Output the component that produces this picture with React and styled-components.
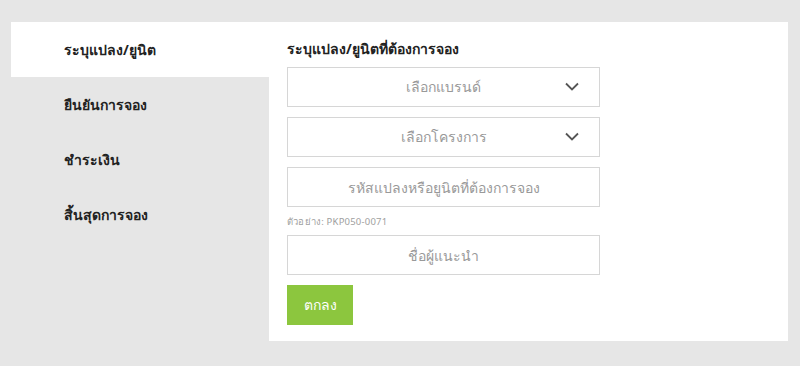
import React from 'react';
import styled, { createGlobalStyle } from 'styled-components';

const GlobalStyle = createGlobalStyle`
  html, body {
    margin: 0;
    padding: 0;
    background: #e6e6e6;
    font-family: "Noto Sans", "Liberation Sans", sans-serif;
  }
`;

const menu = ['ระบุแปลง/ยูนิต', 'ยืนยันการจอง', 'ชำระเงิน', 'สิ้นสุดการจอง'];

function Chevron() {
    return (
        <svg width="14" height="9" viewBox="0 0 14 9" fill="none">
            <path d="M1 1.5 L7 7.5 L13 1.5" stroke="#555" strokeWidth="1.8" />
        </svg>
    );
}

function App() {
    const [active, setActive] = React.useState(0);

    return (
        <Page>
            <GlobalStyle />
            <Card>
                <Sidebar>
                    {menu.map((label, i) => (
                        <MenuItem key={label} $active={i === active} onClick={() => setActive(i)}>
                            {label}
                        </MenuItem>
                    ))}
                </Sidebar>
                <Content>
                    <Title>ระบุแปลง/ยูนิตที่ต้องการจอง</Title>
                    <Form>
                        <Select>
                            <span>เลือกแบรนด์</span>
                            <Arrow><Chevron /></Arrow>
                        </Select>
                        <Select>
                            <span>เลือกโครงการ</span>
                            <Arrow><Chevron /></Arrow>
                        </Select>
                        <Field>
                            <Input placeholder="รหัสแปลงหรือยูนิตที่ต้องการจอง" />
                            <Hint>ตัวอย่าง: PKP050-0071</Hint>
                        </Field>
                        <Input placeholder="ชื่อผู้แนะนำ" />
                        <Button>ตกลง</Button>
                    </Form>
                </Content>
            </Card>
        </Page>
    );
}

const Page = styled.div`
    padding: 22px 12px 25px 11px;
`;

const Card = styled.div`
    display: flex;
    height: 319px;
`;

const Sidebar = styled.div`
    width: 258px;
    display: flex;
    flex-direction: column;
`;

const MenuItem = styled.div`
    height: 55px;
    display: flex;
    align-items: center;
    padding-left: 53px;
    font-size: 14px;
    font-weight: 700;
    color: #222;
    cursor: pointer;
    background: ${(p) => (p.$active ? '#fff' : 'transparent')};
`;

const Content = styled.div`
    flex: 1;
    background: #fff;
    padding: 17px 18px 0 18px;
`;

const Title = styled.div`
    font-size: 14px;
    font-weight: 700;
    color: #222;
    line-height: 20px;
    margin-bottom: 8px;
`;

const Form = styled.div`
    width: 313px;
    display: flex;
    flex-direction: column;
    gap: 10px;
`;

const Select = styled.div`
    position: relative;
    height: 40px;
    box-sizing: border-box;
    border: 1px solid #d6d6d6;
    display: flex;
    align-items: center;
    justify-content: center;
    font-size: 14px;
    color: #999;
`;

const Arrow = styled.span`
    position: absolute;
    right: 20px;
    top: 50%;
    margin-top: -5px;
    display: flex;
`;

const Field = styled.div`
    display: flex;
    flex-direction: column;
`;

const Input = styled.input`
    height: 40px;
    box-sizing: border-box;
    width: 100%;
    border: 1px solid #d6d6d6;
    text-align: center;
    font-family: inherit;
    font-size: 14px;
    color: #555;
    outline: none;
    &::placeholder {
        color: #999;
    }
`;

const Hint = styled.div`
    font-size: 9.5px;
    letter-spacing: 0.2px;
    color: #a0a0a0;
    line-height: 12px;
    padding-top: 9px;
    margin-bottom: -3px;
`;

const Button = styled.button`
    width: 66px;
    height: 40px;
    border: none;
    background: #8cc63e;
    color: #fff;
    font-family: inherit;
    font-size: 14px;
    cursor: pointer;
`;

export default App;
